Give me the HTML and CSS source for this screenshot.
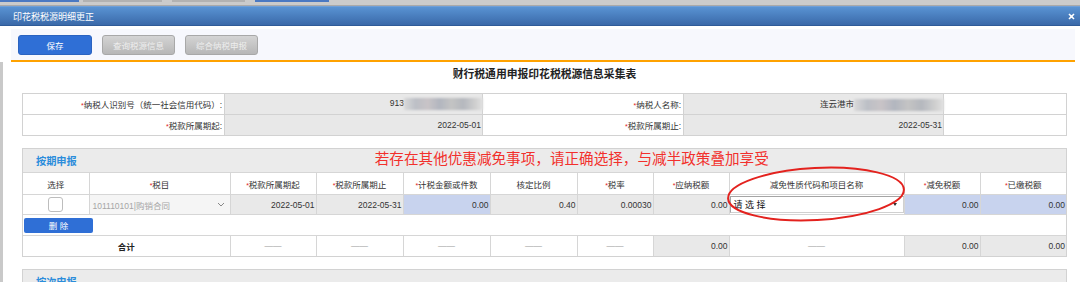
FILE: index.html
```html
<!DOCTYPE html>
<html>
<head>
    <meta charset="utf-8">
    <title>印花税税源明细更正</title>
    <link rel="stylesheet" href="styles.css">
</head>
<body>
    <div class="topstrip">
        <span class="tab tab-blue t1"></span><span class="tab tab-gray t2"></span><span class="tab tab-gray t3"></span><span class="tab tab-blue t4"></span>
    </div>
    <div class="titlebar">
        <span>印花税税源明细更正</span>
        <svg class="close" width="7" height="7" viewBox="0 0 7 7"><path d="M1 1L6 6M6 1L1 6" stroke="#fff" stroke-width="1.6"/><rect x="2.5" y="2.5" width="2" height="2" fill="#fff"/></svg>
    </div>

    <div class="toolwrap">
        <div class="toolbar">
            <button class="btn btn-primary">保存</button>
            <button class="btn btn-disabled">查询税源信息</button>
            <button class="btn btn-disabled">综合纳税申报</button>
        </div>
    </div>

    <div class="content">
        <div class="sheet">
            <h1 class="sheet-title">财行税通用申报印花税税源信息采集表</h1>

            <table class="info">
                <colgroup><col class="w202"><col class="w258"><col class="w201"><col class="w260"><col></colgroup>
                <tr>
                    <td class="label"><span class="req">*</span>纳税人识别号（统一社会信用代码）:</td>
                    <td class="value">913<span class="blur b1"></span></td>
                    <td class="label"><span class="req">*</span>纳税人名称:</td>
                    <td class="value">连云港市<span class="blur b2"></span></td>
                    <td></td>
                </tr>
                <tr>
                    <td class="label"><span class="req">*</span>税款所属期起:</td>
                    <td class="value">2022-05-01</td>
                    <td class="label"><span class="req">*</span>税款所属期止:</td>
                    <td class="value">2022-05-31</td>
                    <td></td>
                </tr>
            </table>

            <div class="section">
                <div class="section-head">
                    <span class="section-name">按期申报</span>
                    <span class="notice">若存在其他优惠减免事项，请正确选择，与减半政策叠加享受</span>
                </div>
                <table class="grid">
                    <colgroup>
                        <col class="c66"><col class="c141"><col class="c86"><col class="c87"><col class="c87"><col class="c87"><col class="c76"><col class="c76"><col class="c175"><col class="c76"><col>
                    </colgroup>
                    <tr class="head">
                        <td>选择</td>
                        <td><span class="req">*</span>税目</td>
                        <td><span class="req">*</span>税款所属期起</td>
                        <td><span class="req">*</span>税款所属期止</td>
                        <td><span class="req">*</span>计税金额或件数</td>
                        <td>核定比例</td>
                        <td><span class="req">*</span>税率</td>
                        <td><span class="req">*</span>应纳税额</td>
                        <td>减免性质代码和项目名称</td>
                        <td><span class="req">*</span>减免税额</td>
                        <td><span class="req">*</span>已缴税额</td>
                    </tr>
                    <tr class="data">
                        <td class="center"><span class="chk"></span></td>
                        <td class="select-cell">
                            <div class="fake-select">
                                <span>101110101|购销合同</span>
                                <svg width="8" height="5" viewBox="0 0 8 5"><path d="M1 1L4 4L7 1" fill="none" stroke="#888" stroke-width="1"/></svg>
                            </div>
                        </td>
                        <td class="num ro">2022-05-01</td>
                        <td class="num ro">2022-05-31</td>
                        <td class="num edit">0.00</td>
                        <td class="num ro">0.40</td>
                        <td class="num ro">0.00030</td>
                        <td class="num ro">0.00</td>
                        <td class="choose-cell">
                            <div class="choose">
                                <span>请 选 择</span>
                                <span class="arrow"></span>
                            </div>
                        </td>
                        <td class="num edit">0.00</td>
                        <td class="num edit">0.00</td>
                    </tr>
                    <tr class="tools">
                        <td colspan="11"><button class="btn-del">删 除</button></td>
                    </tr>
                    <tr class="total">
                        <td colspan="2" class="center bold">合计</td>
                        <td class="center dash">——</td>
                        <td class="center dash">——</td>
                        <td class="center dash">——</td>
                        <td class="center dash">——</td>
                        <td class="center dash">——</td>
                        <td class="num ro">0.00</td>
                        <td class="center dash">——</td>
                        <td class="num ro">0.00</td>
                        <td class="num ro">0.00</td>
                    </tr>
                </table>
                <svg class="mark" width="184" height="60" viewBox="0 0 184 60">
                    <ellipse cx="92" cy="29" rx="88" ry="26" transform="rotate(-3 92 29)" fill="none" stroke="#e3221e" stroke-width="2"/>
                </svg>
            </div>

            <div class="section">
                <div class="section-head">
                    <span class="section-name">按次申报</span>
                </div>
            </div>
        </div>
    </div>
</body>
</html>
```

FILE: styles.css
```css
body { margin: 0; background: #fff; font-family: "Liberation Sans", "Noto Sans CJK SC", sans-serif; font-size: 8.5px; color: #333; overflow: hidden; }

/* window chrome */
.topstrip { height: 6px; background: #cbcbcb; border-bottom: 1px solid #a9a9a9; box-sizing: border-box; font-size: 0; }
.tab { display: inline-block; height: 2px; vertical-align: top; }
.tab-blue { background: #4b79c2; }
.tab-gray { background: #b2b2b2; }
.t1 { width: 79px; }
.t2 { width: 79px; margin-left: 4px; }
.t3 { width: 73px; margin-left: 10px; }
.t4 { width: 74px; margin-left: 10px; }

.titlebar { height: 20px; display: flex; align-items: center; justify-content: space-between; padding: 0 5px 0 13px; background: linear-gradient(#5993d3, #3a69a9); border-top: 1px solid #6f9fd8; border-bottom: 1px solid #2f5b98; box-sizing: border-box; color: #fff; font-size: 9px; }
.close { display: block; }

.toolwrap { padding: 3px 5px 0 11px; }
.toolbar { height: 33px; box-sizing: border-box; padding: 6px 7px; background: #f7f8fd; border-bottom: 2px solid #ffa200; display: flex; gap: 10px; }
.btn { height: 20px; width: 74px; border-radius: 3px; font-family: inherit; font-size: 8.5px; padding: 0; }
.btn-primary { background: #2f6fd6; border: 1px solid #2a63c0; color: #fff; }
.btn-disabled { width: 73px; background: linear-gradient(#d4d4d4, #b7b7b7); border: 1px solid #a8a8a8; color: #eee; }

/* page body */
.content { border-left: 3px solid #c9c9c9; padding-left: 19px; height: 220px; }
.sheet { width: 1045px; }
.sheet-title { margin: 0 0 7px; height: 24px; line-height: 24px; text-align: center; font-size: 10.8px; font-weight: bold; color: #222; }

.req { color: #e0201c; font-size: 7px; }

.info { width: 1045px; border-collapse: collapse; table-layout: fixed; }
.info td { border: 1px solid #d2d2d2; height: 20px; padding: 0 1px; white-space: nowrap; overflow: visible; }
.info .label { text-align: right; padding-right: 2px; background: #fff; }
.info .value { text-align: right; background: #e8e8e8; }
.w202 { width: 202px; }
.w258 { width: 258px; }
.w201 { width: 201px; }
.w260 { width: 260px; }
.blur { display: inline-block; height: 12px; vertical-align: middle; margin-right: -2px; background: linear-gradient(90deg, #d9d9d9, #bcbfc6 15%, #c9c4c7 30%, #b2b6bf 45%, #c4c4c4 60%, #b5b8be 75%, #cfcfcf 90%, #e2e2e2); filter: blur(0.8px); }
.b1 { width: 79px; }
.b2 { width: 90px; }

.section { position: relative; margin-top: 12px; border: 1px solid #d2d2d2; }
.section-head { height: 23px; background: #ebebeb; display: flex; align-items: center; padding-left: 13px; }
.section-name { color: #2b8ddb; font-size: 10.2px; font-weight: bold; }
.notice { margin: 0 0 7px 298px; color: #f2302c; font-size: 14.6px; }

.grid { width: 100%; border-collapse: collapse; table-layout: fixed; }
.grid td { border-top: 1px solid #d6d6d6; border-left: 1px solid #d6d6d6; padding: 0; white-space: nowrap; overflow: hidden; }
.grid td:first-child { border-left: none; }
.c66 { width: 66px; }
.c141 { width: 141px; }
.c86 { width: 86px; }
.c87 { width: 87px; }
.c76 { width: 76px; }
.c175 { width: 175px; }

.grid .head td { height: 21px; text-align: center; background: #fff; }
.grid .data td { height: 19px; }
.grid .tools td { height: 20px; padding-left: 1px; }
.grid .total td { height: 20px; }

.center { text-align: center; }
.bold { font-weight: bold; color: #222; }
.num { text-align: right; padding-right: 1px !important; color: #333; }
.ro { background: #e9e9e9; }
.edit { background: #c8d3ee; }
.dash { color: #999; }

.chk { display: inline-block; width: 13px; height: 13px; border: 1px solid #bdbdbd; border-radius: 3px; background: #fff; vertical-align: middle; }
.select-cell { background: #f5f5f5; }
.fake-select { display: flex; align-items: center; justify-content: space-between; padding: 0 5px 0 3px; color: #a6a6a6; }
.choose-cell { background: #fff; }
.choose { height: 17px; box-sizing: border-box; border: 1px solid #a5a5a5; border-right-color: #d0d0d0; border-bottom-color: #d0d0d0; display: flex; align-items: center; justify-content: space-between; padding: 0 6px 0 3px; color: #111; font-size: 9px; }
.arrow { width: 0; height: 0; border-left: 2.5px solid transparent; border-right: 2.5px solid transparent; border-top: 3px solid #333; }

.btn-del { display: block; width: 69px; height: 15px; border: none; border-radius: 2px; background: #2f6fd6; color: #fff; font-family: inherit; font-size: 8.5px; padding: 0; }

.mark { position: absolute; left: 701px; top: 16px; }
```
